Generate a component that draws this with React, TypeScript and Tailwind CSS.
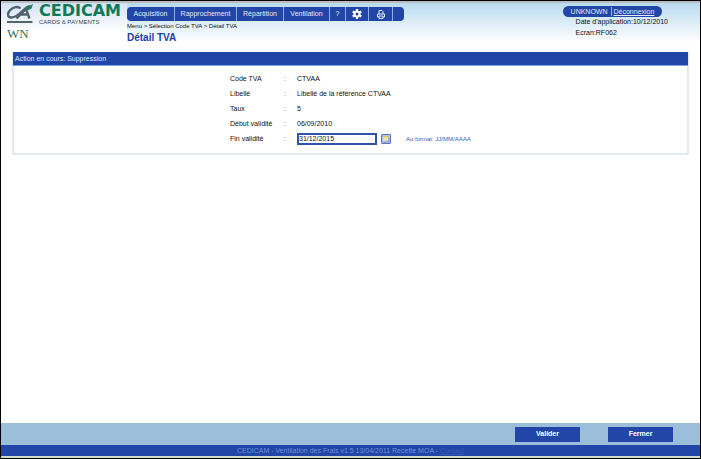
import { useState } from "react";
import type { ReactNode } from "react";

function Logo() {
  return (
    <div className="flex gap-[6px] pt-px">
      <svg viewBox="0 0 26 20" className="h-[20px] w-[26px]" aria-hidden="true">
        <path
          d="M13.500 4.500C11 2 6 2.800 3 6.200C-0.200 10 0.500 13.500 4.500 13.500C9 13.500 13 9.500 16.500 6C18.500 4 20.500 2.500 23 2"
          fill="none"
          stroke="#53636e"
          strokeWidth="2.400"
        />
        <path d="M9.500 14.500 19 5 22.500 14.500M13.500 10.500H21" fill="none" stroke="#53636e" strokeWidth="2.400" />
        <path d="M18.500 4 26 0 24.500 4.500 20.500 6.500Z" fill="#17835c" />
        <path d="M0 18H25.500" stroke="#53636e" strokeWidth="2" />
      </svg>
      <div className="flex flex-col">
        <span className="font-['DejaVu_Sans',sans-serif] text-[16px] leading-[14px] font-bold text-[#0d7a55]">CEDICAM</span>
        <span className="text-[6px] leading-[8px] text-[#3c4b56]">CARDS &amp; PAYMENTS</span>
      </div>
    </div>
  );
}

function NavItem({ children, label, className }: { children: ReactNode; label?: string; className: string }) {
  return (
    <button
      type="button"
      aria-label={label}
      className={`flex h-full items-center justify-center border-r border-[#8fb0e6] ${className}`}
    >
      {children}
    </button>
  );
}

function GearIcon() {
  return (
    <svg viewBox="0 0 20 20" className="size-[10px]" aria-hidden="true">
      <g stroke="#fff" strokeWidth="4.500">
        <path d="M10 0V20M1.340 5 18.660 15M1.340 15 18.660 5" />
      </g>
      <circle cx="10" cy="10" r="7" fill="#fff" />
      <circle cx="10" cy="10" r="3" fill="#2245a8" />
    </svg>
  );
}

function PrinterIcon() {
  return (
    <svg viewBox="0 0 16 18" className="h-[9px] w-[8px]" fill="none" stroke="#e3ebfa" strokeWidth="2" aria-hidden="true">
      <path d="M4 8V1H10L12 3V8M4 14H1V8H15V14H12M4 12H12V17H4Z" />
    </svg>
  );
}

function CalendarIcon() {
  return (
    <svg viewBox="0 0 10 10" className="size-[10px]" aria-hidden="true">
      <rect x="0.500" y="0.500" width="9" height="9" rx="0.500" fill="#b4c3e4" stroke="#5f75c4" />
      <rect x="2" y="2" width="5" height="5" fill="#eee3a0" />
      <path d="M2 2.500H8" stroke="#d9c25c" />
      <path d="M2 8H8V4" fill="none" stroke="#8b9cc4" />
    </svg>
  );
}

function Row({ label, children }: { label: ReactNode; children: ReactNode }) {
  return (
    <div className="flex h-[15px] items-center">
      <dt className="w-[54px]">{label}</dt>
      <dd className="flex items-center">
        <span className="w-[13px] text-[#666]">:</span>
        {children}
      </dd>
    </div>
  );
}

export default function App() {
  const [endDate, setEndDate] = useState("31/12/2015");

  return (
    <div className="flex min-h-screen flex-col border border-black bg-white font-['Liberation_Sans',Arial,sans-serif] text-[7px] leading-[10px] text-[#111]">
      <header className="flex h-[51px] items-start border-t-2 border-[#b9bcc0] bg-linear-to-b from-[#b9dbee] to-white to-80% pr-[32px]">
        <div className="h-full w-[126px] bg-linear-to-b from-[#d3e2f4] to-white to-60% pl-[6px]">
          <Logo />
          <div className="mt-px font-['Liberation_Serif',serif] text-[13px] leading-[14px] text-[#35735f]">WN</div>
        </div>
        <div className="flex flex-1 flex-col items-start pt-[4px]">
          <nav className="flex h-[14px] overflow-hidden rounded-[4px] bg-[#2245a8] pr-[11px] text-[#e3ebfa]">
            <NavItem className="w-[48px]">Acquisition</NavItem>
            <NavItem className="w-[62px]">Rapprochement</NavItem>
            <NavItem className="w-[47px]">Répartition</NavItem>
            <NavItem className="w-[46px]">Ventilation</NavItem>
            <NavItem className="w-[16px]">?</NavItem>
            <NavItem className="w-[23px]" label="Paramètres"><GearIcon /></NavItem>
            <NavItem className="w-[24px]" label="Imprimer"><PrinterIcon /></NavItem>
          </nav>
          <div className="text-[6px] leading-[10px]">Menu &gt; Sélection Code TVA &gt; Détail TVA</div>
          <h1 className="mt-px text-[10px] leading-[12px] font-bold text-[#1d3fa6]">Détail TVA</h1>
        </div>
        <div className="flex flex-col items-start pt-[3px]">
          <div className="flex h-[11px] items-center rounded-full bg-[#2245a8] px-[8px] text-[#e3ebfa]">
            <span className="border-r border-[#8fb0e6] pr-[3px] leading-[9px]">UNKNOWN</span>
            <a href="#deconnexion" className="pl-[2px] underline">Déconnexion</a>
          </div>
          <div className="flex flex-col gap-px pl-[13px]">
            <span>Date d'application:10/12/2010</span>
            <span>Ecran:RF062</span>
          </div>
        </div>
      </header>

      <main className="flex-1 px-[11px]">
        <section className="border-2 border-t-0 border-[#e3e9f1]">
          <h2 className="-mx-[1px] h-[14px] border-b border-[#7f9fe0] bg-[#2245a8] pl-[2px] leading-[14px] text-[#dce7fa]">
            Action en cours: Suppression
          </h2>
          <dl className="pt-[5px] pb-[7px] pl-[216px]">
            <Row label="Code TVA">CTVAA</Row>
            <Row label="Libellé">Libellé de la référence CTVAA</Row>
            <Row label="Taux">5</Row>
            <Row label="Début validité">06/09/2010</Row>
            <Row label={<label htmlFor="fin">Fin validité</label>}>
              <input
                id="fin"
                value={endDate}
                onChange={(e) => setEndDate(e.target.value)}
                className="h-[12px] w-[80px] border-2 border-[#2f52ac] bg-white text-[7px] outline-none"
              />
              <button type="button" aria-label="Calendrier" className="ml-[4px]"><CalendarIcon /></button>
              <span className="ml-[15px] text-[6px] text-[#3563b4]">Au format: JJ/MM/AAAA</span>
            </Row>
          </dl>
        </section>
      </main>

      <footer>
        <div className="flex h-[22px] items-center justify-end gap-[28px] bg-[#9bbedb] pr-[27px] font-bold text-white">
          <button type="button" className="h-[15px] w-[65px] bg-[#2245a8]">Valider</button>
          <button type="button" className="h-[15px] w-[65px] bg-[#2245a8]">Fermer</button>
        </div>
        <div className="h-[13px] border-b-2 border-[#cfdcc8] bg-[#2245a8] text-center leading-[11px] text-[#6d93d6]">
          CEDICAM - Ventilation des Frais v1.5 13/04/2011 Recette MOA -{" "}
          <a href="#contact" className="text-[#315dac] underline">Contact</a>
        </div>
      </footer>
    </div>
  );
}
